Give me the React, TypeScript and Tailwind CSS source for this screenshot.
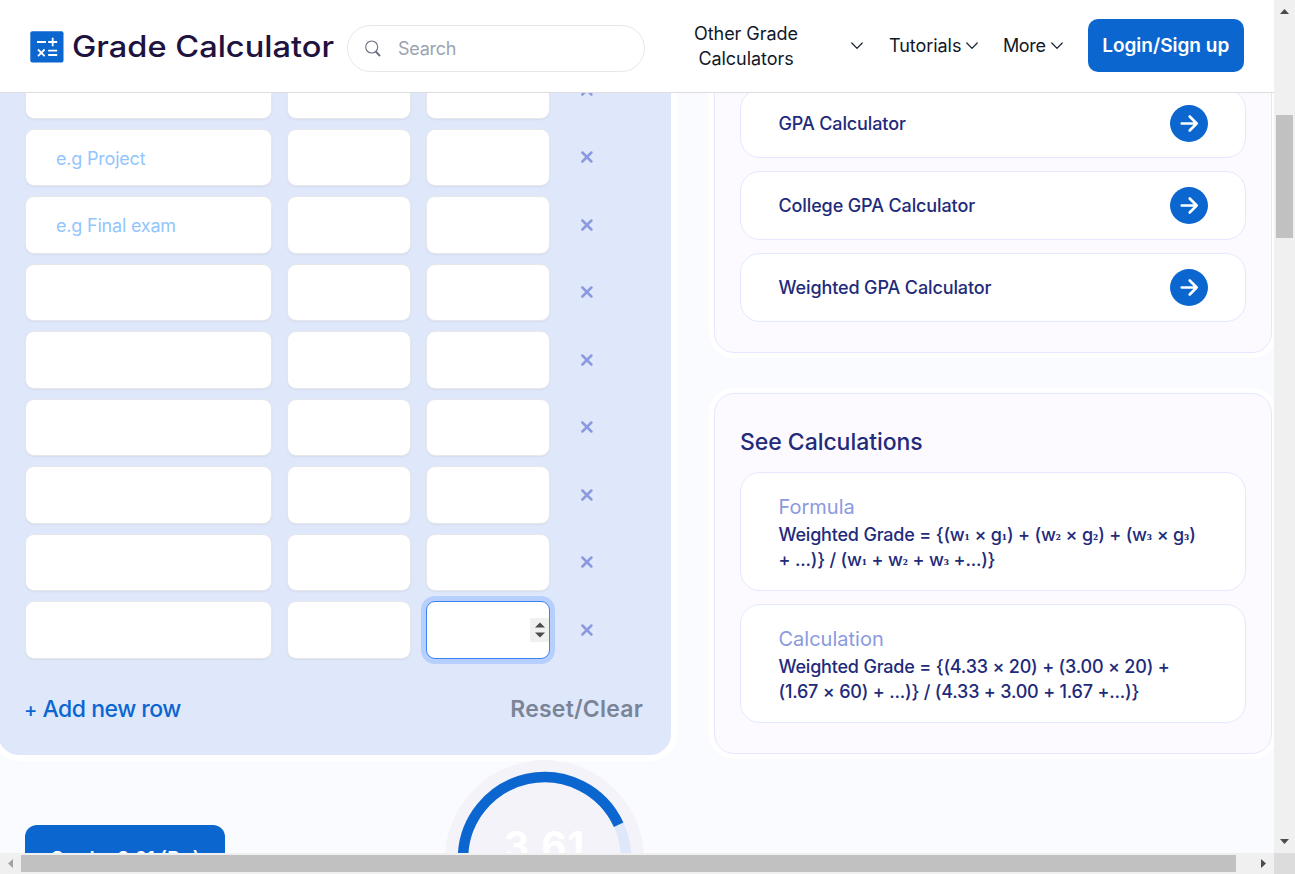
import React from "react";

const rows = ["", "e.g Project", "e.g Final exam", "", "", "", "", "", ""];
const links = ["GPA Calculator", "College GPA Calculator", "Weighted GPA Calculator"];

function Chevron() {
  return (
    <svg width="12" height="8" viewBox="0 0 12 8" fill="none" stroke="#1f2937" strokeWidth="1.3" strokeLinecap="round" strokeLinejoin="round">
      <path d="M.8 1 6 6.4 11.2 1" />
    </svg>
  );
}

function Logo() {
  return (
    <div className="flex items-center">
      <svg className="mt-px shrink-0" width="34" height="32" viewBox="0 0 34 32">
        <rect x=".3" y=".3" width="33.2" height="31.2" rx="2" fill="#0b66d0" />
        <g stroke="#fff" strokeWidth="1.8" fill="none">
          <path d="M7 11h9M18.2 11h9M22.7 6.8v8.4M18.2 19.6h9M18.2 24h9M8 18.5l6.6 6.6M14.6 18.5 8 25.1" />
        </g>
      </svg>
      <svg className="ml-2" width="265" height="46" role="img">
        <text x="0" y="34" textLength="262" lengthAdjust="spacingAndGlyphs" fill="#20123f" fontSize="29.5" fontWeight="500" className="font-['Inter',sans-serif]">Grade Calculator</text>
      </svg>
    </div>
  );
}

function Header() {
  return (
    <header className="flex h-[93px] shrink-0 items-start border-b border-[#dcdde1] bg-white pl-[30px]">
      <div className="mt-[23px] w-[317px]"><Logo /></div>
      <div className="mt-[25px] flex h-[47px] w-[298px] items-center rounded-full border border-[#e5e7eb] pl-[17px]">
        <svg width="16" height="18" viewBox="0 0 16 18" fill="none" stroke="#6b7280">
          <circle cx="6.7" cy="7" r="6" strokeWidth="1.1" />
          <path d="m10.8 11.5 4.2 4.7" strokeWidth="2" />
        </svg>
        <span className="ml-[17px] text-[18px] tracking-[-0.25px] text-[#9ca3af]">Search</span>
      </div>
      <nav className="flex items-start text-[18px] leading-[25px] text-[#111827]">
        <div className="mt-[21px] ml-[45px] w-[112px] text-center tracking-[-0.05px]">Other Grade Calculators</div>
        <div className="mt-[42px] ml-[49px] flex"><Chevron /></div>
        <div className="mt-[33px] ml-[26px] flex items-center gap-[5px] tracking-[-0.05px]"><span>Tutorials</span><Chevron /></div>
        <div className="mt-[33px] ml-[24.5px] flex items-center gap-[5px] tracking-[-0.3px]"><span>More</span><Chevron /></div>
      </nav>
      <button className="mt-[19px] ml-[25px] h-[53px] w-[156px] rounded-[10px] bg-[#0b66d0] pt-[2px] text-[19px] font-semibold whitespace-nowrap text-white">Login/Sign up</button>
    </header>
  );
}

const field = "flex h-[57.5px] items-center rounded-[9px] border border-[#e5e7eb] bg-white shadow-xs";
const focused = "flex h-[57.5px] items-center justify-end rounded-[9px] border border-[#3b82f6] bg-white ring-[5px] ring-[#b6cffc]";

function GradeRow({ label, active }: { label: string; active: boolean }) {
  return (
    <div className="flex items-center">
      <div className={field + " w-[247px] pt-[2px] pl-[30px] text-[18px] tracking-[-0.2px] text-[#93c5fd]"}>{label}</div>
      <div className={field + " ml-[15px] w-[124px]"} />
      <div className={(active ? focused : field) + " ml-[15px] w-[124px]"}>
        {active && (
          <div className="flex h-6 w-[19px] items-center justify-center bg-[#f0f0f0]">
            <svg width="10" height="16" viewBox="0 0 10 16" fill="#4b4b4b"><path d="M0 5.5 5 .5l5 5zM0 10.5h10l-5 5z" /></svg>
          </div>
        )}
      </div>
      <svg className="ml-[30px]" width="14" height="12" viewBox="0 0 14 12" stroke="#8b9ade" strokeWidth="2.5" strokeLinecap="round">
        <path d="m2.4 1.5 9 9m0-9-9 9" />
      </svg>
    </div>
  );
}

function GradePanel() {
  return (
    <section className="-ml-[2px] flex h-[662px] w-[673px] shrink-0 flex-col overflow-hidden rounded-b-[21px] bg-[#dfe7fb] pl-[27px]">
      <div className="-mt-[32px] flex flex-col gap-[10px]">
        {rows.map((r, i) => <GradeRow key={i} label={r} active={i === rows.length - 1} />)}
      </div>
      <div className="mt-[34.5px] flex h-8 items-center justify-between pr-[28px] text-[23px]">
        <span className="font-medium tracking-[-0.5px] text-[#0b66d0]"><span className="-ml-px text-[20px]">+</span> Add new row</span>
        <span className="font-semibold tracking-[0.2px] text-[#7a8497]">Reset/Clear</span>
      </div>
    </section>
  );
}

function Summary() {
  return (
    <div className="flex justify-between pl-[25px]">
      <div className="mt-[70px] flex h-[60px] w-[200px] justify-center rounded-[12px] bg-[#0b66d0] pt-[21px] text-[19px] leading-[25px] font-semibold tracking-[0.1px] whitespace-nowrap text-white">Grade: 3.61 (B+)</div>
      <svg className="mt-[5px] mr-[27px]" width="200" height="200" viewBox="0 0 200 200">
        <circle cx="100.5" cy="99.5" r="99.5" fill="#f3f3f9" />
        <circle cx="100.5" cy="98.5" r="81.5" fill="none" stroke="#dfe7fb" strokeWidth="10.5" />
        <path d="M19 98.5A81.5 81.5 0 0 1 174.6 64.7" fill="none" stroke="#0b66d0" strokeWidth="10.5" />
        <text x="100" y="100" textAnchor="middle" textLength="80" fill="#fff" fontSize="39" fontWeight="700" className="font-['Inter',sans-serif]">3.61</text>
      </svg>
    </div>
  );
}

function LinkCard({ label }: { label: string }) {
  return (
    <div className="flex h-[69px] items-center justify-between rounded-[20px] border border-[#e5e7ff] bg-white pr-[37px] pl-[37.5px]">
      <span className="text-[18px] font-[550] tracking-[-0.12px] text-[#222a7a]">{label}</span>
      <svg width="38" height="37" viewBox="0 0.5 38 37" fill="none">
        <ellipse cx="19" cy="19" rx="19" ry="18.5" fill="#0b66d0" />
        <path d="M11.7 19h15M19.7 12l7 7-7 7" stroke="#fff" strokeWidth="2.6" strokeLinecap="round" strokeLinejoin="round" />
      </svg>
    </div>
  );
}

function CalcCard({ title, lines }: { title: string; lines: React.ReactNode[] }) {
  return (
    <div className="h-[119px] rounded-[20px] border border-[#e5e7ff] bg-white pt-[20px] pl-[37.5px] whitespace-nowrap">
      <div className="text-[20px] leading-7 text-[#8b9ade]">{title}</div>
      <div className="mt-px text-[18px] leading-[25px] font-[550] tracking-[-0.2px] text-[#222a7a]">
        {lines.map((l, i) => <div key={i}>{l}</div>)}
      </div>
    </div>
  );
}

function Sub({ children }: { children: string }) {
  return <span className="align-[1.5px] font-['DejaVu_Serif',serif] text-[12px] leading-none font-bold tracking-normal">{children}</span>;
}

function Term({ n }: { n: string }) {
  return <>(w<Sub>{n}</Sub> × g<Sub>{n}</Sub>)</>;
}

const formula = [
  <>Weighted Grade = {"{"}<Term n="₁" /> + <Term n="₂" /> + <Term n="₃" /></>,
  <>+ ...){"}"} / (w<Sub>₁</Sub> + w<Sub>₂</Sub> + w<Sub>₃</Sub> +...){"}"}</>,
];

export default function App() {
  return (
    <div className="flex h-[874px] w-[1295px] flex-col overflow-hidden bg-[#f0f0f0] font-['Inter','Liberation_Sans',sans-serif]">
      <div className="flex h-[853px]">
        <div className="flex w-[1274px] flex-col overflow-hidden bg-[#fafbff]">
          <Header />
          <main className="flex h-[760px] overflow-hidden">
            <div className="w-[671px] shrink-0">
              <div className="-ml-[8px] w-[685px] rounded-b-[27px] bg-white pb-[6px] pl-[8px]"><GradePanel /></div>
              <div className="-mt-[6px]"><Summary /></div>
            </div>
            <div className="ml-[43px] flex w-[558px] shrink-0 flex-col gap-[40px]">
              <section className="-mt-[20px] flex h-[280px] flex-col gap-[13px] rounded-[20px] border border-[#e5e7ff] bg-[#fcfaff] px-[25px] pt-[15px] ring-[5px] ring-white">
                {links.map((l) => <LinkCard key={l} label={l} />)}
              </section>
              <section className="flex h-[361px] flex-col gap-[13px] rounded-[20px] border border-[#e5e7ff] bg-[#fcfaff] px-[25px] pt-[32px] ring-[5px] ring-white">
                <h2 className="mb-[1px] h-8 text-[23px] leading-8 font-medium tracking-[-0.05px] text-[#222a7a]">See Calculations</h2>
                <CalcCard title="Formula" lines={formula} />
                <CalcCard title="Calculation" lines={["Weighted Grade = {(4.33 × 20) + (3.00 × 20) +", "(1.67 × 60) + ...)} / (4.33 + 3.00 + 1.67 +...)}"]} />
              </section>
            </div>
          </main>
        </div>
        <div className="flex w-[21px] flex-col items-center bg-[#f0f0f0] pt-[9px] pb-[9px]">
          <svg width="9" height="5"><path d="M0 5 4.5 0 9 5z" fill="#4b4b4b" /></svg>
          <div className="mt-[101px] h-[123px] w-[17px] bg-[#c1c1c1]" />
          <svg className="mt-auto" width="9" height="5"><path d="M0 0h9L4.5 5z" fill="#4b4b4b" /></svg>
        </div>
      </div>
      <div className="flex h-[21px] items-center bg-[#f0f0f0]">
        <svg className="ml-2" width="5" height="9"><path d="M5 0v9L0 4.5z" fill="#a3a3a3" /></svg>
        <div className="ml-2 h-[17px] w-[1215px] bg-[#c1c1c1]" />
        <svg className="ml-[25px]" width="5" height="9"><path d="M0 0v9l5-4.5z" fill="#4b4b4b" /></svg>
        <div className="ml-auto h-full w-[21px] bg-[#dcdcdc]" />
      </div>
    </div>
  );
}
